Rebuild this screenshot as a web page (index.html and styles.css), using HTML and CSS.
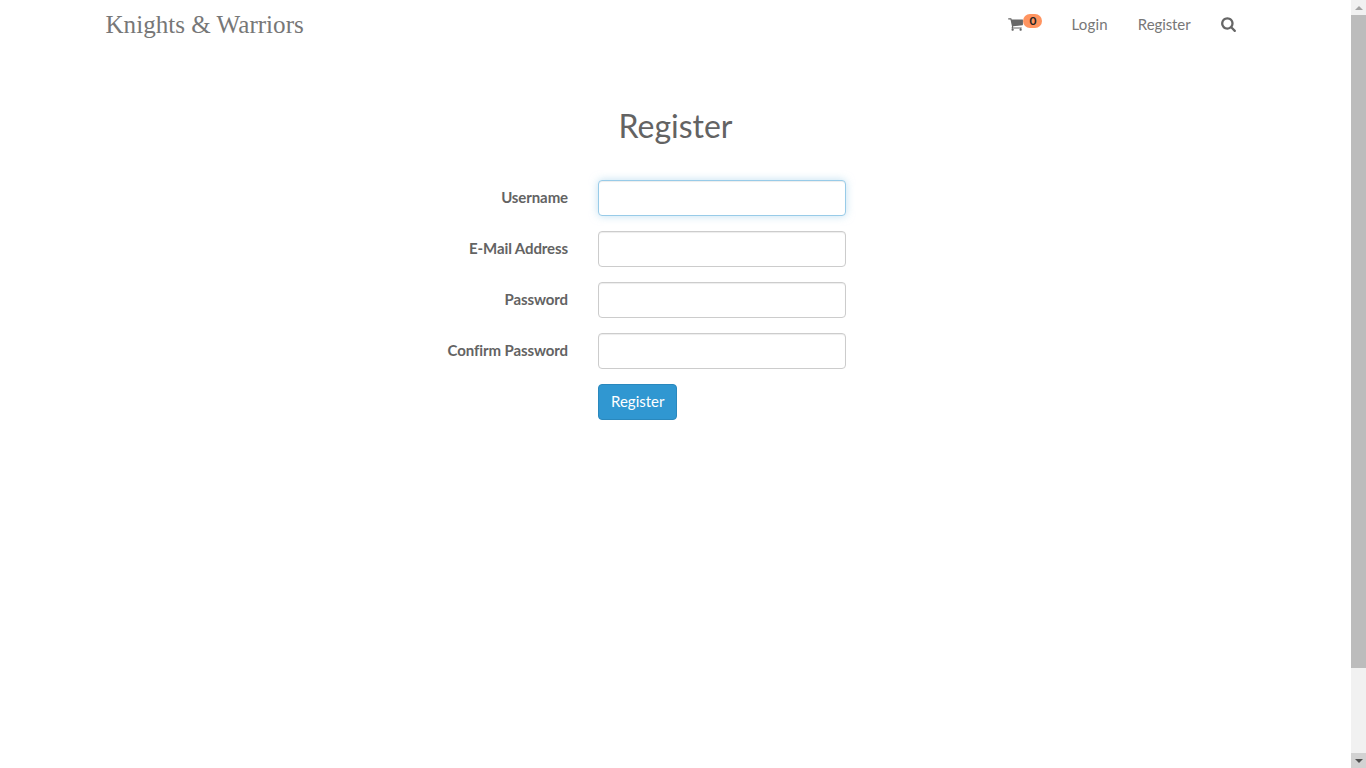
FILE: index.html
```html
<!doctype html>
<html lang="en">
  <head>
    <meta charset="UTF-8" />
    <title>Register - Knights &amp; Warriors</title>
    <link rel="stylesheet" href="styles.css">
  </head>
  <body>
    <div class="page">
      <nav class="navbar">
        <a class="brand" href="#">Knights &amp; Warriors</a>
        <ul class="nav-links">
          <li>
            <a class="cart" href="#">
              <svg class="icon-cart" viewBox="0 0 1664 1792" width="15" height="16" aria-hidden="true">
                <path d="M640 1536q0 52-38 90t-90 38-90-38-38-90 38-90 90-38 90 38 38 90zm896 0q0 52-38 90t-90 38-90-38-38-90 38-90 90-38 90 38 38 90zm128-1088v512q0 24-16.500 42.500t-40.500 21.500l-1044 122q13 60 13 70 0 16-24 64h920q26 0 45 19t19 45-19 45-45 19h-1024q-26 0-45-19t-19-45q0-11 8-31.500t16-36 21.500-40 15.500-29.500l-177-823h-204q-26 0-45-19t-19-45 19-45 45-19h256q16 0 28.500 6.500t19.500 15.500 13 24.500 8 26 5.500 29.500 4.500 26h1201q26 0 45 19t19 45z" />
              </svg>
              <span class="badge">0</span>
            </a>
          </li>
          <li><a class="nav-login" href="#">Login</a></li>
          <li><a class="nav-register" href="#">Register</a></li>
          <li>
            <a href="#" aria-label="Search">
              <svg class="icon-search" viewBox="0 0 1664 1792" width="15" height="16" aria-hidden="true">
                <path d="M1152 832q0-185-131.500-316.500t-316.500-131.500-316.500 131.500-131.500 316.500 131.500 316.500 316.500 131.500 316.500-131.500 131.500-316.500zm512 832q0 52-38 90t-90 38q-54 0-90-38l-343-342q-179 124-399 124-143 0-273.500-55.500t-225-150-150-225-55.500-273.500 55.500-273.500 150-225 225-150 273.500-55.500 273.500 55.500 225 150 150 225 55.500 273.500q0 220-124 399l343 343q37 37 37 90z" />
              </svg>
            </a>
          </li>
        </ul>
      </nav>

      <main class="content">
        <h1>Register</h1>
        <form class="register-form">
          <label for="name">Username</label>
          <input id="name" class="is-focused" type="text" />
          <label for="email">E-Mail Address</label>
          <input id="email" type="email" />
          <label for="password">Password</label>
          <input id="password" type="password" />
          <label for="confirm">Confirm Password</label>
          <input id="confirm" type="password" />
          <button class="btn" type="button">Register</button>
        </form>
      </main>
    </div>

    <div class="scrollbar" aria-hidden="true">
      <div class="scroll-btn"><span class="arrow-up"></span></div>
      <div class="scroll-track"><div class="scroll-thumb"></div></div>
      <div class="scroll-btn is-pressed"><span class="arrow-down"></span></div>
    </div>
  </body>
</html>
```

FILE: styles.css
```css
html,
body {
  height: 100%;
}

body {
  margin: 0;
  display: flex;
  overflow: hidden;
  background: #fff;
  color: #636363;
  font-family: Lato, "Open Sans", sans-serif;
  font-size: 14px;
}

a {
  color: #777;
  text-decoration: none;
}

.page {
  flex: 1;
  min-width: 0;
}

.navbar {
  width: 1140px;
  height: 50px;
  margin: 0 auto;
  display: flex;
  align-items: center;
  justify-content: space-between;
}

.brand {
  font-family: "Liberation Serif", serif;
  font-size: 25.1px;
}

.nav-links {
  display: flex;
  align-items: center;
  gap: 30px;
  margin: 0 10px 2px 0;
  padding: 0;
  list-style: none;
  font-size: 15px;
}

.nav-login {
  letter-spacing: 0.2px;
}

.nav-register {
  letter-spacing: -0.1px;
}

.cart {
  display: flex;
  align-items: center;
  margin-right: -1px;
}

.icon-cart,
.icon-search {
  display: block;
  fill: #666;
}

.badge {
  margin: -7px 0 0 0;
  width: 19px;
  height: 14px;
  border-radius: 7px;
  background: #ff9460;
  color: #222;
  font-size: 12px;
  font-weight: 700;
  line-height: 14px;
  text-align: center;
}

.content {
  padding-top: 53px;
}

h1 {
  margin: 0 0 31px;
  font-size: 32px;
  font-weight: 400;
  line-height: 46px;
  text-align: center;
}

.register-form {
  width: 555px;
  margin: 0 auto;
  display: grid;
  grid-template-columns: 170px 248px;
  column-gap: 30px;
  row-gap: 15px;
  align-items: center;
}

.register-form label {
  margin-bottom: 2px;
  font-size: 15px;
  font-weight: 700;
  letter-spacing: -0.1px;
  text-align: right;
}

.register-form input {
  box-sizing: border-box;
  width: 248px;
  height: 36px;
  padding: 6px 12px;
  border: 1px solid #ccc;
  border-radius: 4px;
  background: #fff;
  box-shadow: inset 0 1px 1px rgba(0, 0, 0, 0.075);
}

.register-form input.is-focused {
  border-color: #98cbe8;
  box-shadow: inset 0 1px 1px rgba(0, 0, 0, 0.075), 0 0 8px rgba(152, 203, 232, 0.6);
}

.btn {
  grid-column: 2;
  justify-self: start;
  height: 36px;
  padding: 5px 12px 7px;
  border: 1px solid #2a88bd;
  border-radius: 4px;
  background: #3097d1;
  color: #fff;
  font-family: inherit;
  font-size: 15px;
}

.scrollbar {
  flex: none;
  width: 15px;
  height: 768px;
  display: flex;
  flex-direction: column;
  background: #f1f1f1;
}

.scroll-btn {
  flex: none;
  height: 15px;
  display: flex;
  align-items: center;
  justify-content: center;
}

.scroll-btn.is-pressed {
  background: #d2d2d2;
}

.scroll-track {
  flex: 1;
}

.scroll-thumb {
  height: 653px;
  background: #bcbcbc;
}

.arrow-up,
.arrow-down {
  width: 0;
  height: 0;
  border-left: 4px solid transparent;
  border-right: 4px solid transparent;
}

.arrow-up {
  border-bottom: 4px solid #a3a3a3;
}

.arrow-down {
  border-top: 4px solid #505050;
}
```
